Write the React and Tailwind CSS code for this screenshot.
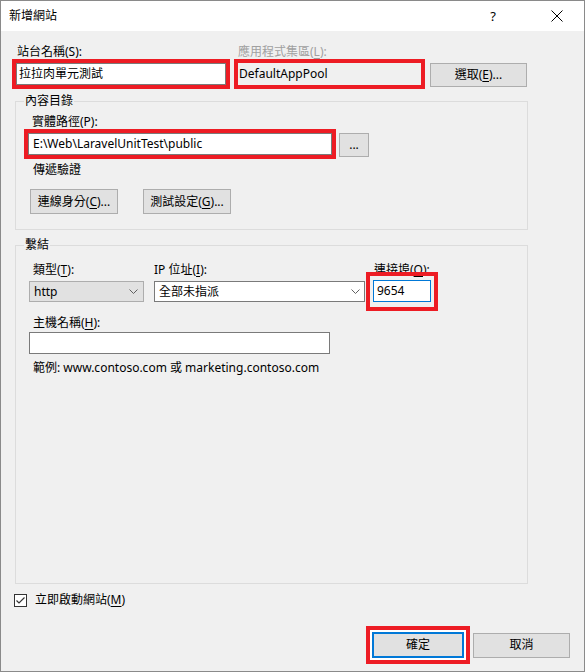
import React from "react";

const red = "border-4 border-[#ed1c24]";

const Btn = ({ children, className = "" }) => (
  <div
    className={`flex items-center justify-center bg-[#e1e1e1] border border-[#adadad] leading-[14px] ${className}`}
  >
    {children}
  </div>
);

const Chevron = () => (
  <svg width="9" height="5" viewBox="0 0 9 5" className="shrink-0">
    <polyline points="0.5,0.5 4.5,4.5 8.5,0.5" fill="none" stroke="#606060" strokeWidth="1" />
  </svg>
);

const U = ({ children }) => <span className="underline underline-offset-2">{children}</span>;

const Group = ({ title, className, children }) => (
  <fieldset className={`ml-[14px] w-[513px] border border-[#dcdcdc] p-0 m-0 ${className}`}>
    <legend className="ml-[8px] px-[1px] leading-[14px]">{title}</legend>
    {children}
  </fieldset>
);

const App = () => {
  return (
    <div className="w-[585px] h-[672px] border border-[#8a8a8a] bg-[#f0f0f0] flex flex-col text-[12px] text-black font-['Noto_Sans','Noto_Sans_CJK_TC',sans-serif]">
      {/* title bar */}
      <div className="h-[30px] bg-white flex items-center pl-[8px] pr-[21px] shrink-0">
        <span className="leading-[14px]">新增網站</span>
        <span className="ml-auto text-[13px] leading-[14px]">?</span>
        <svg width="12" height="12" viewBox="0 0 12 12" className="ml-[55px]">
          <path d="M0.5 0.5 L11.5 11.5 M11.5 0.5 L0.5 11.5" stroke="#000" strokeWidth="1" />
        </svg>
      </div>

      {/* site name / app pool */}
      <div className="flex mt-[14px] ml-[11px]">
        <div className="w-[218px]">
          <div className="pl-[5px] h-[14px] leading-[14px]">站台名稱(S):</div>
          <div className={`h-[30px] ${red}`}>
            <div className="h-full bg-white border border-[#7a7a7a] pl-[2px] flex items-center">拉拉肉單元測試</div>
          </div>
        </div>
        <div className="w-[191px] ml-[4px]">
          <div className="pl-[4px] h-[14px] leading-[14px] text-[#a0a0a0]">應用程式集區(<U>L</U>):</div>
          <div className={`h-[30px] ${red}`}>
            <div className="h-full bg-[#f0f0f0] pl-[1px] flex items-center">DefaultAppPool</div>
          </div>
        </div>
        <div className="ml-[5px] pt-[18px]">
          <Btn className="w-[97px] h-[24px]">
            選取(<U>E</U>)...
          </Btn>
        </div>
      </div>

      {/* content directory */}
      <Group title="內容目錄" className="mt-[5px] h-[136px]">
        <div className="mt-[7px] ml-[16px] h-[14px] leading-[14px]">實體路徑(P):</div>
        <div className="flex ml-[8px]">
          <div className={`w-[312px] h-[30px] ${red}`}>
            <div className="h-full bg-white border border-[#7a7a7a] pl-[4px] flex items-center">
              E:\Web\LaravelUnitTest\public
            </div>
          </div>
          <Btn className="ml-[3px] mt-[4px] w-[30px] h-[24px]">...</Btn>
        </div>
        <div className="mt-[4px] ml-[17px] h-[14px] leading-[14px]">傳遞驗證</div>
        <div className="flex mt-[12px] ml-[14px] gap-[25px]">
          <Btn className="w-[88px] h-[25px]">
            連線身分(<U>C</U>)...
          </Btn>
          <Btn className="w-[88px] h-[25px]">
            測試設定(<U>G</U>)...
          </Btn>
        </div>
      </Group>

      {/* bindings */}
      <Group title="繫結" className="mt-[8px] h-[346px]">
        <div className="flex mt-[11px] ml-[13px]">
          <div className="w-[115px]">
            <div className="pl-[4px] h-[14px] leading-[14px]">
              類型(<U>T</U>):
            </div>
            <div className="mt-[4px] h-[21px] bg-[#e1e1e1] border border-[#adadad] flex items-center pl-[4px] pr-[5px]">
              <span className="flex-1">http</span>
              <Chevron />
            </div>
          </div>
          <div className="w-[211px] ml-[10px]">
            <div className="h-[14px] leading-[14px]">
              IP 位址(<U>I</U>):
            </div>
            <div className="mt-[4px] h-[21px] bg-white border border-[#7a7a7a] flex items-center pl-[4px] pr-[4px]">
              <span className="flex-1">全部未指派</span>
              <Chevron />
            </div>
          </div>
          <div className="w-[58px] ml-[8px] relative">
            <div className="pl-[1px] h-[14px] leading-[14px]">
              連接埠(<U>O</U>):
            </div>
            <div className="mt-[3px] h-[22px] bg-white border border-[#0078d7] flex items-center pl-[3px]">9654</div>
            <div className={`absolute left-[-7px] right-[-7px] top-[9px] bottom-[-9px] ${red} pointer-events-none`} />
          </div>
        </div>
        <div className="mt-[14px] ml-[17px] h-[14px] leading-[14px]">
          主機名稱(<U>H</U>):
        </div>
        <div className="mt-[2px] ml-[13px] w-[301px] h-[22px] bg-white border border-[#7a7a7a]" />
        <div className="mt-[7px] ml-[17px] h-[14px] leading-[14px]">
          範例: www.contoso.com 或 marketing.contoso.com
        </div>
      </Group>

      {/* start immediately */}
      <div className="flex items-center mt-[9px] ml-[13px]">
        <div className="w-[13px] h-[13px] border border-[#333] bg-white flex items-center justify-center">
          <svg width="11" height="11" viewBox="0 0 11 11">
            <polyline points="1.5,5.5 4,8 9.5,2.5" fill="none" stroke="#333" strokeWidth="1.2" />
          </svg>
        </div>
        <span className="ml-[8px] leading-[14px]">
          立即啟動網站(<U>M</U>)
        </span>
      </div>

      {/* ok / cancel */}
      <div className="flex items-center justify-end mt-[19px] pr-[14px]">
        <div className={`${red} bg-white p-[2px]`}>
          <div className="w-[92px] h-[26px] bg-[#e1e1e1] border-2 border-[#0078d7] flex items-center justify-center leading-[14px]">
            確定
          </div>
        </div>
        <Btn className="ml-[3px] w-[97px] h-[25px]">取消</Btn>
      </div>
    </div>
  );
};

export default App;
